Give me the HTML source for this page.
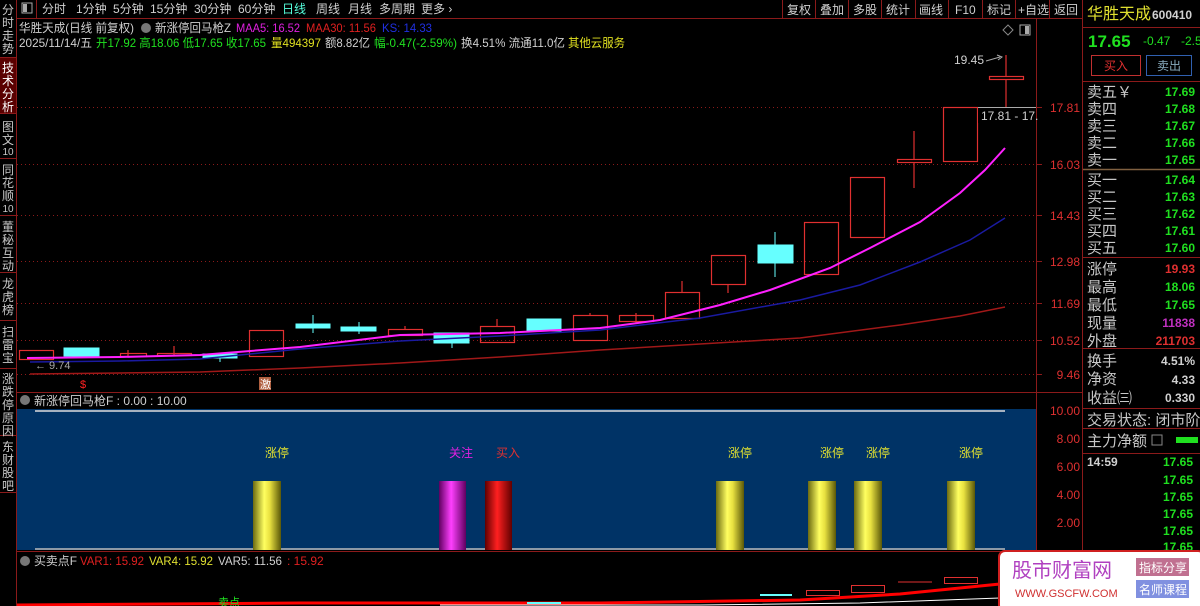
<!DOCTYPE html>
<html><head><meta charset="utf-8"><style>
html,body{margin:0;padding:0;background:#000;width:1200px;height:606px;overflow:hidden}
svg{display:block}
text{font-family:"Liberation Sans","Noto Sans CJK SC",sans-serif}
</style></head><body>
<svg width="1200" height="606" viewBox="0 0 1200 606" xmlns="http://www.w3.org/2000/svg">
<rect width="1200" height="606" fill="#000"/>
<g stroke="#8b1a1a" stroke-width="1">
<line x1="16.5" y1="0" x2="16.5" y2="606"/>
<line x1="0" y1="57.5" x2="16" y2="57.5"/>
<line x1="0" y1="113.5" x2="16" y2="113.5"/>
<line x1="0" y1="158.5" x2="16" y2="158.5"/>
<line x1="0" y1="215.5" x2="16" y2="215.5"/>
<line x1="0" y1="272.5" x2="16" y2="272.5"/>
<line x1="0" y1="320.5" x2="16" y2="320.5"/>
<line x1="0" y1="368.5" x2="16" y2="368.5"/>
<line x1="0" y1="435.5" x2="16" y2="435.5"/>
<line x1="0" y1="492.5" x2="16" y2="492.5"/>
</g>
<rect x="0" y="58" width="16" height="55" fill="#5a0000"/>
<g fill="#c8c8c8" font-size="12" text-anchor="middle">
<text x="8" y="14">分</text><text x="8" y="27">时</text><text x="8" y="40">走</text><text x="8" y="53">势</text>
<text x="8" y="72" fill="#fff">技</text><text x="8" y="85" fill="#fff">术</text><text x="8" y="98" fill="#fff">分</text><text x="8" y="111" fill="#fff">析</text>
<text x="8" y="131">图</text><text x="8" y="144">文</text><text x="8" y="155" font-size="10">10</text>
<text x="8" y="174">同</text><text x="8" y="187">花</text><text x="8" y="200">顺</text><text x="8" y="212" font-size="10">10</text>
<text x="8" y="231">董</text><text x="8" y="244">秘</text><text x="8" y="257">互</text><text x="8" y="270">动</text>
<text x="8" y="288">龙</text><text x="8" y="301">虎</text><text x="8" y="314">榜</text>
<text x="8" y="336">扫</text><text x="8" y="349">雷</text><text x="8" y="362">宝</text>
<text x="8" y="383">涨</text><text x="8" y="396">跌</text><text x="8" y="409">停</text><text x="8" y="422">原</text><text x="8" y="435">因</text>
<text x="8" y="451">东</text><text x="8" y="464">财</text><text x="8" y="477">股</text><text x="8" y="490">吧</text>
</g>
<line x1="17" y1="18.5" x2="1083" y2="18.5" stroke="#8b1a1a"/>
<rect x="22" y="3" width="10" height="10" fill="none" stroke="#aaa"/><rect x="23" y="4" width="4" height="8" fill="#aaa"/>
<line x1="36.5" y1="0" x2="36.5" y2="18" stroke="#8b1a1a"/>
<g font-size="12" fill="#d0d0d0">
<text x="42" y="13">分时</text><text x="76" y="13">1分钟</text><text x="113" y="13">5分钟</text><text x="150" y="13">15分钟</text><text x="194" y="13">30分钟</text><text x="238" y="13">60分钟</text>
<text x="282" y="13" fill="#5fd">日线</text><text x="316" y="13">周线</text><text x="348" y="13">月线</text><text x="379" y="13">多周期</text><text x="421" y="13">更多 ›</text>
</g>
<g stroke="#8b1a1a"><line x1="782.5" y1="0" x2="782.5" y2="18"/><line x1="815.5" y1="0" x2="815.5" y2="18"/><line x1="848.5" y1="0" x2="848.5" y2="18"/><line x1="881.5" y1="0" x2="881.5" y2="18"/><line x1="915.5" y1="0" x2="915.5" y2="18"/><line x1="948.5" y1="0" x2="948.5" y2="18"/><line x1="982.5" y1="0" x2="982.5" y2="18"/><line x1="1015.5" y1="0" x2="1015.5" y2="18"/><line x1="1049.5" y1="0" x2="1049.5" y2="18"/></g>
<g font-size="12" fill="#d0d0d0">
<text x="787" y="14">复权</text><text x="820" y="14">叠加</text><text x="853" y="14">多股</text><text x="886" y="14">统计</text><text x="919" y="14">画线</text><text x="955" y="14">F10</text><text x="987" y="14">标记</text><text x="1018" y="14">+自选</text><text x="1054" y="14">返回</text>
</g>
<g font-size="12" lengthAdjust="spacingAndGlyphs">
<text x="19" y="32" fill="#d0d0d0" textLength="115" lengthAdjust="spacingAndGlyphs">华胜天成(日线 前复权)</text>
<circle cx="146" cy="28" r="5" fill="#777"/>
<text x="155" y="32" fill="#d0d0d0" textLength="76" lengthAdjust="spacingAndGlyphs">新涨停回马枪Z</text>
<text x="236" y="32" fill="#e020e0" textLength="64" lengthAdjust="spacingAndGlyphs">MAA5: 16.52</text>
<text x="306" y="32" fill="#e02020" textLength="70" lengthAdjust="spacingAndGlyphs">MAA30: 11.56</text>
<text x="382" y="32" fill="#2030e0" textLength="50" lengthAdjust="spacingAndGlyphs">KS: 14.33</text>
<text x="19" y="47" fill="#d0d0d0" textLength="73" lengthAdjust="spacingAndGlyphs">2025/11/14/五</text>
<text x="96" y="47" fill="#20e020" textLength="170" lengthAdjust="spacingAndGlyphs">开17.92 高18.06 低17.65 收17.65</text>
<text x="271" y="47" fill="#e0e020" textLength="50" lengthAdjust="spacingAndGlyphs">量494397</text>
<text x="325" y="47" fill="#d0d0d0" textLength="45" lengthAdjust="spacingAndGlyphs">额8.82亿</text>
<text x="374" y="47" fill="#20e020" textLength="83" lengthAdjust="spacingAndGlyphs">幅-0.47(-2.59%)</text>
<text x="461" y="47" fill="#d0d0d0" textLength="104" lengthAdjust="spacingAndGlyphs">换4.51% 流通11.0亿</text>
<text x="568" y="47" fill="#e0e020" textLength="57" lengthAdjust="spacingAndGlyphs">其他云服务</text>
</g>
<line x1="1036.5" y1="19" x2="1036.5" y2="606" stroke="#8b1a1a"/>
<line x1="1082.5" y1="0" x2="1082.5" y2="606" stroke="#8b1a1a"/>
<g stroke="#8b1a1a" stroke-dasharray="1,3">
<line x1="17" y1="107.5" x2="1036" y2="107.5"/><line x1="17" y1="164.5" x2="1036" y2="164.5"/><line x1="17" y1="215.5" x2="1036" y2="215.5"/><line x1="17" y1="261.5" x2="1036" y2="261.5"/><line x1="17" y1="303.5" x2="1036" y2="303.5"/><line x1="17" y1="340.5" x2="1036" y2="340.5"/><line x1="17" y1="374.5" x2="1036" y2="374.5"/>
</g>
<g font-size="12" fill="#e03030" text-anchor="end">
<text x="1080" y="112">17.81</text><text x="1080" y="169">16.03</text><text x="1080" y="220">14.43</text><text x="1080" y="266">12.98</text><text x="1080" y="308">11.69</text><text x="1080" y="345">10.52</text><text x="1080" y="379">9.46</text>
</g>
<g stroke="#8b1a1a"><line x1="1036" y1="107.5" x2="1042" y2="107.5"/><line x1="1036" y1="164.5" x2="1042" y2="164.5"/><line x1="1036" y1="215.5" x2="1042" y2="215.5"/><line x1="1036" y1="261.5" x2="1042" y2="261.5"/><line x1="1036" y1="303.5" x2="1042" y2="303.5"/><line x1="1036" y1="340.5" x2="1042" y2="340.5"/><line x1="1036" y1="374.5" x2="1042" y2="374.5"/></g>
<path d="M1008 25 L1013 30 L1008 35 L1003 30 Z" fill="none" stroke="#888"/>
<rect x="1020" y="25" width="10" height="10" fill="none" stroke="#aaa"/><rect x="1025" y="26" width="4" height="8" fill="#aaa"/>
<g fill="none" stroke="#e03030" stroke-width="1.2">
<rect x="19.5" y="350.5" width="34" height="9"/>
<line x1="128" y1="350" x2="128" y2="356"/><rect x="120.5" y="353.5" width="26" height="3"/>
<line x1="174" y1="346" x2="174" y2="356"/><rect x="157.5" y="353.5" width="34" height="2"/>
<rect x="249.5" y="330.5" width="34" height="26"/>
<rect x="388.5" y="329.5" width="34" height="6"/><line x1="405" y1="326" x2="405" y2="329"/>
<rect x="480.5" y="326.5" width="34" height="16"/><line x1="497" y1="319" x2="497" y2="326"/>
<rect x="573.5" y="315.5" width="34" height="25"/><line x1="590" y1="313" x2="590" y2="315"/>
<rect x="619.5" y="315.5" width="34" height="6"/><line x1="636" y1="313" x2="636" y2="324"/>
<rect x="665.5" y="292.5" width="34" height="26"/><line x1="682" y1="281" x2="682" y2="292"/>
<rect x="711.5" y="255.5" width="34" height="29"/><line x1="728" y1="284" x2="728" y2="293"/>
<rect x="804.5" y="222.5" width="34" height="52"/>
<rect x="850.5" y="177.5" width="34" height="60"/>
<rect x="897.5" y="159.5" width="34" height="3"/><line x1="914" y1="131" x2="914" y2="159"/><line x1="914" y1="163" x2="914" y2="188"/>
<rect x="943.5" y="107.5" width="34" height="54"/>
<rect x="989.5" y="76.5" width="34" height="3"/><line x1="1006" y1="55" x2="1006" y2="76"/><line x1="1006" y1="80" x2="1006" y2="107"/>
</g>
<g fill="#6ff" stroke="#6ff">
<rect x="64" y="348" width="35" height="8"/>
<rect x="203" y="354" width="34" height="4"/><line x1="220" y1="358" x2="220" y2="362"/>
<rect x="296" y="324" width="34" height="4"/><line x1="313" y1="315" x2="313" y2="333"/>
<rect x="341" y="327" width="35" height="4"/><line x1="359" y1="322" x2="359" y2="334"/>
<rect x="434" y="333" width="35" height="10"/><line x1="452" y1="343" x2="452" y2="348"/>
<rect x="527" y="319" width="34" height="12"/>
<rect x="758" y="245" width="35" height="18"/><line x1="775" y1="232" x2="775" y2="277"/>
</g>
<polyline fill="none" stroke="#a01818" stroke-width="1.5" points="30,374 120,373 200,372 300,368 400,363 500,357 600,350 700,344 800,338 900,325 960,316 1005,307"/>
<polyline fill="none" stroke="#1a1aa0" stroke-width="1.5" points="30,362 120,361 200,359 300,349 400,341 500,336 600,330 700,318 800,300 860,285 920,262 970,240 1005,218"/>
<polyline fill="none" stroke="#ff20ff" stroke-width="2" points="27,358 120,357 200,355 300,347 400,335 500,333 600,328 660,320 720,305 770,290 830,268 870,248 920,222 960,193 985,170 1005,148"/>
<text x="954" y="64" font-size="12" fill="#d0d0d0">19.45</text>
<path d="M986 61 L1000 57" stroke="#aaa"/><path d="M997 55 L1002 57 L998 60" fill="none" stroke="#aaa"/>
<rect x="978" y="107" width="58" height="16" fill="#000"/>
<line x1="978" y1="107.5" x2="1036" y2="107.5" stroke="#aaa"/>
<text x="981" y="120" font-size="12" fill="#d0d0d0">17.81 - 17.</text>
<text x="35" y="369" font-size="11" fill="#aaa">← 9.74</text>
<text x="80" y="388" font-size="11" fill="#f22">$</text>
<rect x="259" y="377" width="12" height="13" fill="#b06040"/><text x="260" y="388" font-size="11" fill="#fff">激</text>
<line x1="17" y1="392.5" x2="1082" y2="392.5" stroke="#8b1a1a"/>
<circle cx="25" cy="400" r="5" fill="#777"/>
<text x="34" y="405" font-size="12" fill="#d0d0d0">新涨停回马枪F : 0.00 : 10.00</text>
<rect x="17" y="409" width="1019" height="141" fill="#003366"/>
<line x1="35" y1="411" x2="1005" y2="411" stroke="#ddd" stroke-width="1.5"/>
<line x1="35" y1="549" x2="1005" y2="549" stroke="#bbb" stroke-width="1.5"/>
<g font-size="12" fill="#e03030" text-anchor="end">
<text x="1080" y="415">10.00</text><text x="1080" y="443">8.00</text><text x="1080" y="471">6.00</text><text x="1080" y="499">4.00</text><text x="1080" y="527">2.00</text>
</g>
<defs>
<linearGradient id="gy" x1="0" x2="1"><stop offset="0" stop-color="#6b6a10"/><stop offset=".4" stop-color="#ffff60"/><stop offset=".6" stop-color="#e8e040"/><stop offset="1" stop-color="#5a5808"/></linearGradient>
<linearGradient id="gm" x1="0" x2="1"><stop offset="0" stop-color="#600060"/><stop offset=".45" stop-color="#ff40ff"/><stop offset="1" stop-color="#600060"/></linearGradient>
<linearGradient id="gr" x1="0" x2="1"><stop offset="0" stop-color="#600000"/><stop offset=".45" stop-color="#ff2020"/><stop offset="1" stop-color="#600000"/></linearGradient>
</defs>
<g>
<rect x="253" y="481" width="28" height="69" fill="url(#gy)"/>
<rect x="439" y="481" width="27" height="69" fill="url(#gm)"/>
<rect x="485" y="481" width="27" height="69" fill="url(#gr)"/>
<rect x="716" y="481" width="28" height="69" fill="url(#gy)"/>
<rect x="808" y="481" width="28" height="69" fill="url(#gy)"/>
<rect x="854" y="481" width="28" height="69" fill="url(#gy)"/>
<rect x="947" y="481" width="28" height="69" fill="url(#gy)"/>
</g>
<g font-size="12" fill="#e0e030">
<text x="265" y="457">涨停</text><text x="449" y="457" fill="#e020e0">关注</text><text x="496" y="457" fill="#e03030">买入</text>
<text x="728" y="457">涨停</text><text x="820" y="457">涨停</text><text x="866" y="457">涨停</text><text x="959" y="457">涨停</text>
</g>
<line x1="17" y1="551.5" x2="1082" y2="551.5" stroke="#8b1a1a"/>
<circle cx="25" cy="561" r="5" fill="#777"/>
<text x="34" y="565" font-size="12" fill="#d0d0d0" textLength="43" lengthAdjust="spacingAndGlyphs">买卖点F</text>
<text x="80" y="565" font-size="12" fill="#e02020" textLength="64" lengthAdjust="spacingAndGlyphs">VAR1: 15.92</text>
<text x="149" y="565" font-size="12" fill="#e0e030" textLength="64" lengthAdjust="spacingAndGlyphs">VAR4: 15.92</text>
<text x="218" y="565" font-size="12" fill="#d0d0d0" textLength="64" lengthAdjust="spacingAndGlyphs">VAR5: 11.56</text>
<text x="287" y="565" font-size="12" fill="#e02020">: 15.92</text>
<polyline fill="none" stroke="#f00" stroke-width="3" points="17,605 300,603 600,603 800,600 900,594 1000,584 1036,580"/>
<polyline fill="none" stroke="#fff" stroke-width="1" points="440,605 700,605 860,603 1000,598 1036,597"/>
<g fill="none" stroke="#e03030">
<rect x="806.5" y="590.5" width="33" height="5"/><rect x="851.5" y="585.5" width="33" height="7"/><rect x="944.5" y="577.5" width="33" height="6"/>
<line x1="898" y1="582" x2="932" y2="582"/>
</g>
<line x1="760" y1="595" x2="792" y2="595" stroke="#6ff" stroke-width="2"/>
<line x1="527" y1="603" x2="561" y2="603" stroke="#6ff" stroke-width="2"/>
<text x="218" y="606" font-size="11" fill="#20e020">卖点</text>
<text x="1087" y="19" font-size="16" fill="#e0e030">华胜天成</text>
<text x="1152" y="19" font-size="12" fill="#d0d0d0" font-weight="bold">600410</text>
<line x1="1083" y1="27.5" x2="1200" y2="27.5" stroke="#8b1a1a"/>
<text x="1088" y="47" font-size="17" font-weight="bold" fill="#20e020">17.65</text>
<text x="1143" y="45" font-size="12" fill="#20e020">-0.47</text>
<text x="1181" y="45" font-size="12" fill="#20e020">-2.5</text>
<rect x="1091.5" y="55.5" width="49" height="20" fill="none" stroke="#c03030"/>
<text x="1104" y="70" font-size="12" fill="#e03030">买入</text>
<rect x="1146.5" y="55.5" width="45" height="20" fill="none" stroke="#3060b0"/>
<text x="1157" y="70" font-size="12" fill="#8ab">卖出</text>
<line x1="1083" y1="81.5" x2="1200" y2="81.5" stroke="#8b1a1a"/>
<line x1="1083" y1="169.5" x2="1200" y2="169.5" stroke="#806040" stroke-width="1.5"/>
<line x1="1083" y1="257.5" x2="1200" y2="257.5" stroke="#8b1a1a"/>
<line x1="1083" y1="348.5" x2="1200" y2="348.5" stroke="#8b1a1a"/>
<line x1="1083" y1="408.5" x2="1200" y2="408.5" stroke="#8b1a1a"/>
<line x1="1083" y1="428.5" x2="1200" y2="428.5" stroke="#8b1a1a"/>
<line x1="1083" y1="453.5" x2="1200" y2="453.5" stroke="#8b1a1a"/>
<g font-size="15" fill="#c8c8c8">
<text x="1087" y="97">卖五￥</text><text x="1087" y="114">卖四</text><text x="1087" y="131">卖三</text><text x="1087" y="148">卖二</text><text x="1087" y="165">卖一</text>
<text x="1087" y="185">买一</text><text x="1087" y="202">买二</text><text x="1087" y="219">买三</text><text x="1087" y="236">买四</text><text x="1087" y="253">买五</text>
<text x="1087" y="274">涨停</text><text x="1087" y="292">最高</text><text x="1087" y="310">最低</text><text x="1087" y="328">现量</text><text x="1087" y="346">外盘</text>
<text x="1087" y="366">换手</text><text x="1087" y="384">净资</text><text x="1087" y="403">收益㈢</text>
<text x="1087" y="425">交易状态: 闭市阶</text>
<text x="1087" y="446">主力净额</text>
</g>
<rect x="1152" y="435" width="10" height="10" fill="none" stroke="#888"/>
<rect x="1176" y="437" width="22" height="6" fill="#20e020"/>
<g font-size="12" font-weight="bold" fill="#20e020" text-anchor="end">
<text x="1195" y="96">17.69</text><text x="1195" y="113">17.68</text><text x="1195" y="130">17.67</text><text x="1195" y="147">17.66</text><text x="1195" y="164">17.65</text>
<text x="1195" y="184">17.64</text><text x="1195" y="201">17.63</text><text x="1195" y="218">17.62</text><text x="1195" y="235">17.61</text><text x="1195" y="252">17.60</text>
<text x="1195" y="273" fill="#e03030">19.93</text><text x="1195" y="291">18.06</text><text x="1195" y="309">17.65</text><text x="1195" y="327" fill="#c030c0">11838</text><text x="1195" y="345" fill="#e03030">211703</text>
<text x="1195" y="365" fill="#d0d0d0">4.51%</text><text x="1195" y="384" fill="#d0d0d0">4.33</text><text x="1195" y="402" fill="#d0d0d0">0.330</text>
<text x="1087" y="466" text-anchor="start" fill="#d0d0d0">14:59</text>
<text x="1193" y="466">17.65</text><text x="1193" y="484">17.65</text><text x="1193" y="501">17.65</text><text x="1193" y="518">17.65</text><text x="1193" y="535">17.65</text><text x="1193" y="551">17.65</text>
</g>
<rect x="999" y="551" width="205" height="60" rx="6" fill="#fff" stroke="#d02020" stroke-width="2"/>
<text x="1012" y="577" font-size="20" fill="#b040c0" font-family="Liberation Serif,Noto Serif CJK SC,serif">股市财富网</text>
<text x="1015" y="597" font-size="11" fill="#d03030" font-family="Liberation Serif,serif">WWW.GSCFW.COM</text>
<rect x="1136" y="558" width="53" height="18" fill="#c07090"/>
<text x="1139" y="572" font-size="12" fill="#fff">指标分享</text>
<rect x="1136" y="580" width="53" height="18" fill="#8090e0"/>
<text x="1139" y="594" font-size="12" fill="#fff">名师课程</text>
</svg>
</body></html>
